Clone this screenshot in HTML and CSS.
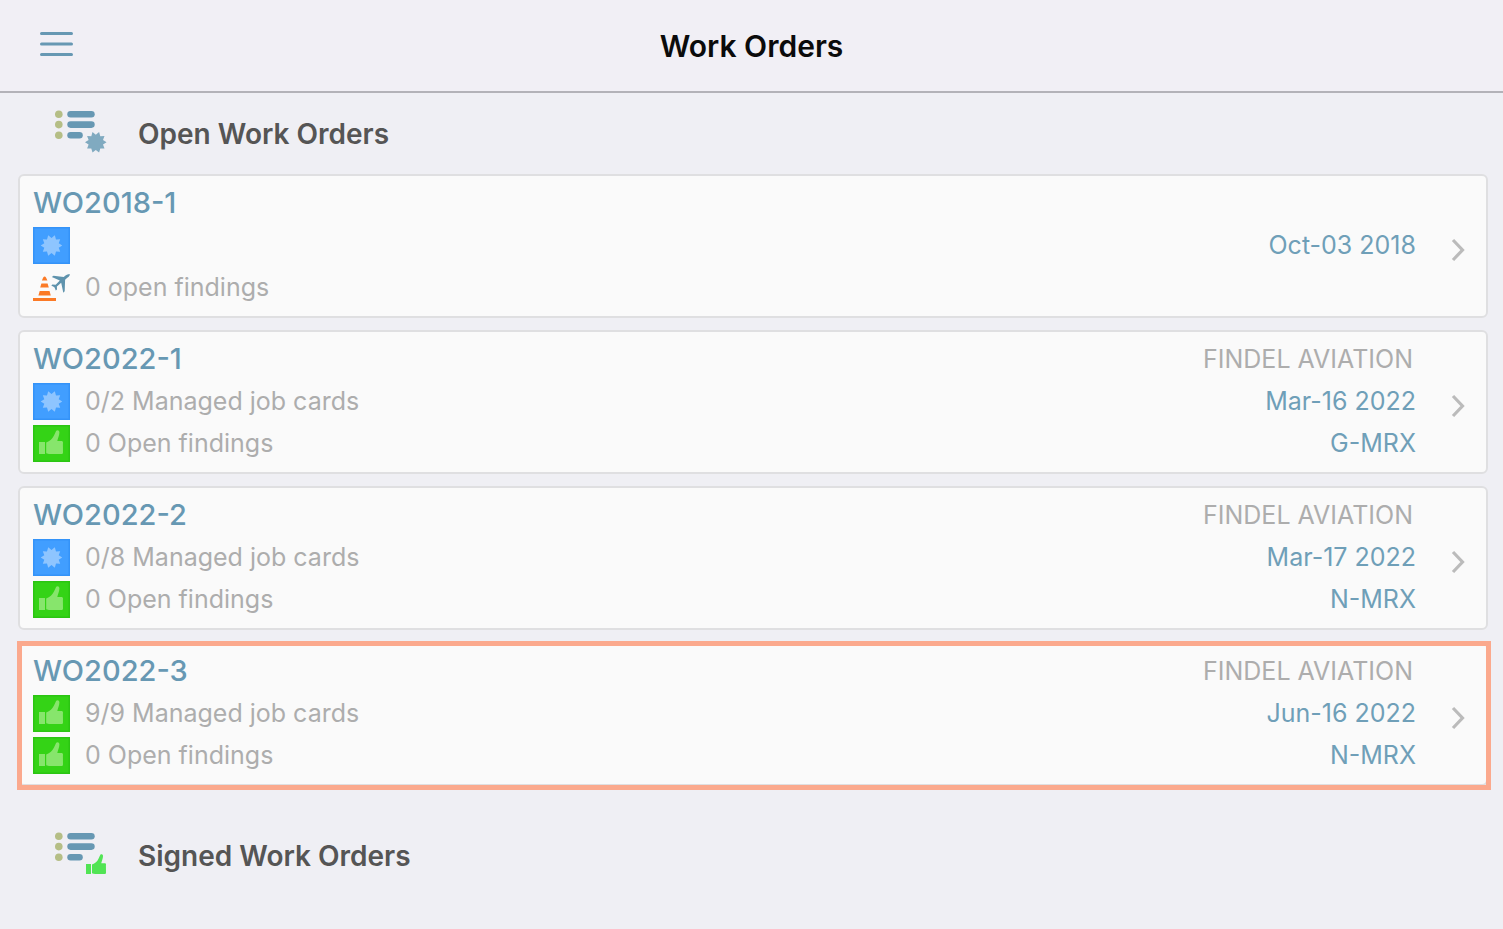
FILE: index.html
```html
<!DOCTYPE html>
<html lang="en">
	<head>
		<meta charset="utf-8">
		<title>Work Orders</title>
		<link rel="stylesheet" href="styles.css">
	</head>
	<body>
		<!-- shared icon shapes -->
		<svg class="icon-defs" aria-hidden="true">
			<symbol id="burst" viewBox="-11 -11 22 22">
				<path d="M10.8 0 7.2 2.3 8.7 6.3 4.5 6.1 3.3 10.3 0 7.6-3.3 10.3-4.5 6.1-8.7 6.3-7.2 2.3-10.8 0-7.2-2.3-8.7-6.3-4.5-6.1-3.3-10.3 0-7.6 3.3-10.3 4.5-6.1 8.7-6.3 7.2-2.3Z"/>
			</symbol>
			<symbol id="thumb" viewBox="0 0 24 24">
				<path d="M0 12h6v12H0zM7.2 12.6C11 11 13.4 9 15 5.6L17.2.8C18.5-.4 20.6.4 20.4 2.6 20.3 5.5 19 8.2 18.3 11H22.5C24 11 24.2 12.5 23.9 13.8L24 22.5C24 23.6 23.4 24 22 24H11C9.5 24 8.4 23.5 7.2 23.2Z"/>
			</symbol>
			<symbol id="list" viewBox="0 0 52 44">
				<g fill="#b5be86">
					<circle cx="3.8" cy="4.3" r="3.8"/>
					<circle cx="3.8" cy="14.6" r="3.8"/>
					<circle cx="3.8" cy="25.2" r="3.8"/>
				</g>
				<g fill="#6798b3">
					<rect x="12.3" y="1" width="27.4" height="6.6" rx="3.3"/>
					<rect x="12.3" y="11.3" width="27.4" height="6.6" rx="3.3"/>
					<rect x="12.3" y="21.9" width="15.5" height="6.6" rx="3.3"/>
				</g>
			</symbol>
			<symbol id="job" viewBox="0 0 37 37">
				<rect width="37" height="37" fill="#3493f8"/>
				<rect x="1.5" y="1.5" width="34" height="34" fill="#419eff"/>
				<use href="#burst" x="7.5" y="7.5" width="22" height="22" fill="#8ec5ff"/>
			</symbol>
			<symbol id="done" viewBox="0 0 37 37">
				<rect width="37" height="37" fill="#2bc512"/>
				<rect x="1.5" y="1.5" width="34" height="34" fill="#34d316"/>
				<use href="#thumb" x="6" y="5" width="24" height="24" fill="#87e56c"/>
			</symbol>
			<symbol id="cone" viewBox="0 0 37 37">
				<g fill="#fb7a26">
					<path d="M10.2 8.5Q11.7 6.5 13 8.5L14.4 11.5H8.9ZM8.4 14.5H14.6L15.8 18.6H7.2ZM6.7 22H16.5L17.8 26.6H5.4Z"/>
					<rect y="29" width="23" height="3"/>
				</g>
				<path fill="#5f93ad" d="M37 5.4C35 5.2 33.4 5.9 31.9 7.1L30.7 8 20.5 6.8 18.8 8.1 26.8 11.5 22.7 15.8 19.4 15.4 18.3 16.5 21.4 18.3 22.8 21.6 24 20.5 23.9 17.4 28.2 13.7 30.3 23.8 31.7 22.3 32.1 10.8 34 9C35.6 7.9 36.5 6.9 37 5.4Z"/>
			</symbol>
			<symbol id="chevron" viewBox="0 0 14 24">
				<path d="M2 2 11.5 12 2 22" fill="none" stroke="#bbb" stroke-width="3.2"/>
			</symbol>
		</svg>

		<header class="top-bar">
			<button class="menu-button" aria-label="Menu">
				<svg width="33" height="26" viewBox="0 0 33 26">
					<path d="M1.5 2.5H31.5M1.5 13H31.5M1.5 23.5H31.5" stroke="#6798b3" stroke-width="3" stroke-linecap="round"/>
				</svg>
			</button>
			<h1 class="page-title">Work Orders</h1>
		</header>

		<main>
			<section class="orders">
				<h2 class="section-title">
					<svg class="section-icon" viewBox="0 0 52 44">
						<use href="#list" width="52" height="44"/>
						<use href="#burst" x="29.8" y="21.3" width="22" height="22" fill="#80aac0"/>
					</svg>
					Open Work Orders
				</h2>
				<ul class="order-list">
					<li>
						<a class="order" href="#">
							<span class="order-info">
								<span class="order-number">WO2018-1</span>
								<span class="status"><svg class="status-icon"><use href="#job"/></svg></span>
								<span class="status"><svg class="status-icon"><use href="#cone"/></svg>0 open findings</span>
							</span>
							<span class="order-meta">
								<span class="date">Oct-03 2018</span>
							</span>
							<svg class="chevron"><use href="#chevron"/></svg>
						</a>
					</li>
					<li>
						<a class="order" href="#">
							<span class="order-info">
								<span class="order-number">WO2022-1</span>
								<span class="status"><svg class="status-icon"><use href="#job"/></svg>0/2 Managed job cards</span>
								<span class="status"><svg class="status-icon"><use href="#done"/></svg>0 Open findings</span>
							</span>
							<span class="order-meta">
								<span class="company">FINDEL AVIATION</span>
								<span class="date">Mar-16 2022</span>
								<span>G-MRX</span>
							</span>
							<svg class="chevron"><use href="#chevron"/></svg>
						</a>
					</li>
					<li>
						<a class="order" href="#">
							<span class="order-info">
								<span class="order-number">WO2022-2</span>
								<span class="status"><svg class="status-icon"><use href="#job"/></svg>0/8 Managed job cards</span>
								<span class="status"><svg class="status-icon"><use href="#done"/></svg>0 Open findings</span>
							</span>
							<span class="order-meta">
								<span class="company">FINDEL AVIATION</span>
								<span class="date">Mar-17 2022</span>
								<span>N-MRX</span>
							</span>
							<svg class="chevron"><use href="#chevron"/></svg>
						</a>
					</li>
					<li>
						<a class="order is-selected" href="#">
							<span class="order-info">
								<span class="order-number">WO2022-3</span>
								<span class="status"><svg class="status-icon"><use href="#done"/></svg>9/9 Managed job cards</span>
								<span class="status"><svg class="status-icon"><use href="#done"/></svg>0 Open findings</span>
							</span>
							<span class="order-meta">
								<span class="company">FINDEL AVIATION</span>
								<span class="date">Jun-16 2022</span>
								<span>N-MRX</span>
							</span>
							<svg class="chevron"><use href="#chevron"/></svg>
						</a>
					</li>
				</ul>
			</section>

			<section class="orders">
				<h2 class="section-title">
					<svg class="section-icon" viewBox="0 0 52 44">
						<use href="#list" width="52" height="44"/>
						<use href="#thumb" x="31" y="22" width="20" height="20" fill="#51e454"/>
					</svg>
					Signed Work Orders
				</h2>
			</section>
		</main>
	</body>
</html>
```
FILE: styles.css
```css
*{
	box-sizing: border-box;
}
body{
	margin: 0;
	background-color: #efeff4;
	font-family: Inter, "Liberation Sans", sans-serif;
	font-size: 25px;
	color: #adadad;
}
.icon-defs{
	display: none;
}
.top-bar{
	display: grid;
	grid-template-columns: 1fr auto 1fr;
	align-items: center;
	height: 93px;
	padding: 0 40px;
	background-color: #f1eff5;
	border-bottom: 2px solid #b3b2b8;
}
.menu-button{
	justify-self: start;
	padding: 0 0 4px;
	border: none;
	background: none;
	cursor: pointer;
}
.menu-button svg{
	display: block;
}
.page-title{
	margin: 0;
	font-size: 30px;
	font-weight: 600;
	color: #0b0b0b;
}
.orders{
	margin-bottom: 29px;
}
.section-title{
	display: flex;
	align-items: center;
	gap: 31px;
	height: 81px;
	margin: 0;
	padding-left: 55px;
	font-size: 28px;
	font-weight: 600;
	color: #555;
}
.section-icon{
	width: 52px;
	height: 44px;
	margin-bottom: 4px;
}
.order-list{
	display: flex;
	flex-direction: column;
	gap: 12px;
	margin: 0;
	padding: 0 15px 0 18px;
	list-style: none;
}
.order{
	display: flex;
	position: relative;
	padding: 6px 21px 8px 13px;
	border: 2px solid #dfdfe1;
	border-radius: 6px;
	background-color: #fafafa;
	color: inherit;
	text-decoration: none;
}
.is-selected::after{
	content: "";
	position: absolute;
	inset: -3px -5px -6px -3px;
	border: 5px solid #fba98d;
}
.order-info,
.order-meta{
	display: grid;
	grid-template-rows: repeat(3, 42px);
	align-items: center;
}
.order-info{
	flex: 1;
}
.order-number{
	padding-bottom: 2px;
	font-size: 29px;
	font-weight: 500;
	color: #6798b3;
}
.status{
	display: flex;
	align-items: center;
	gap: 15px;
}
.status-icon{
	width: 37px;
	height: 37px;
}
.order-meta{
	justify-items: end;
	color: #6f9fb8;
}
.company{
	padding-right: 3px;
	color: #adadad;
}
.date{
	grid-row: 2;
}
.chevron{
	align-self: center;
	width: 14px;
	height: 24px;
	margin: 10px 0 0 35px;
}
```
